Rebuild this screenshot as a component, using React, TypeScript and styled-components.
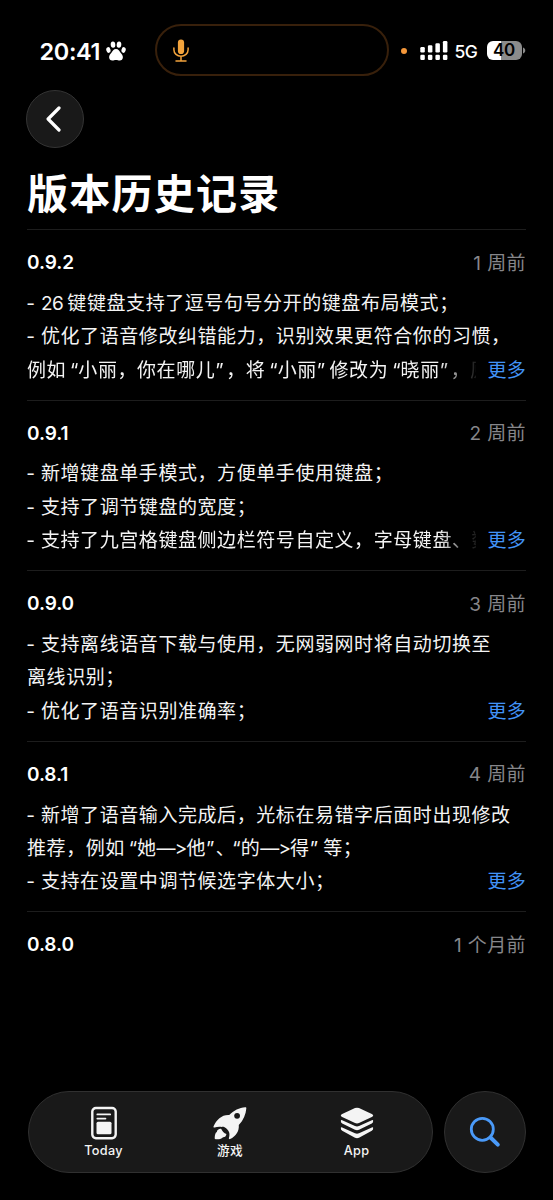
import React from "react";
import styled, { createGlobalStyle } from "styled-components";

const GlobalStyle = createGlobalStyle`
  html, body { margin: 0; padding: 0; background: #000; }
  * { box-sizing: border-box; }
  body {
    font-family: Inter, "Noto Sans CJK SC", sans-serif;
    font-feature-settings: "calt" 0;
    color: #fff;
    text-spacing-trim: space-all;
    text-autospace: no-autospace;
  }
`;

const Screen = styled.div`
  width: 553px;
  height: 1200px;
  display: flex;
  flex-direction: column;
  background: #000;
  overflow: hidden;
`;

const StatusBar = styled.header`
  height: 76px;
  padding: 24px 28px 0 39px;
  display: grid;
  grid-template-columns: 116px 234px 1fr;
  flex: none;
`;

const Clock = styled.div`
  display: flex;
  align-items: center;
  gap: 6px;
  height: 54px;
  padding-left: 0.6px;
  font-size: 23.5px;
  font-weight: 600;
  letter-spacing: -0.4px;
`;

const Island = styled.div`
  height: 52px;
  border: 2px solid #38200b;
  border-radius: 26px;
  padding-left: 16px;
  display: flex;
  align-items: center;
`;

const Indicators = styled.div`
  height: 53px;
  display: flex;
  align-items: center;
  padding-left: 12px;
`;

const MicDot = styled.i`
  width: 6px;
  height: 6px;
  border-radius: 50%;
  background: #f4973a;
  margin-right: 12.5px;
`;

const Network = styled.span`
  font-size: 17.5px;
  font-weight: 500;
  letter-spacing: -0.5px;
  margin: 1px 0 0 7px;
  width: 32px;
`;

const Battery = styled.div`
  width: 35px;
  height: 19px;
  border-radius: 6px;
  background: linear-gradient(90deg, #fff 40%, #8b8b8b 40%);
  color: #000;
  font-size: 17px;
  font-weight: 600;
  letter-spacing: -0.3px;
  line-height: 19px;
  text-align: center;
`;

const NavRow = styled.nav`
  padding: 14px 26px 0;
  height: 86px;
  flex: none;
`;

const BackButton = styled.button`
  width: 58px;
  height: 58px;
  padding: 0;
  border-radius: 50%;
  border: 1px solid #343434;
  background: #191919;
  display: flex;
  align-items: center;
  justify-content: center;
`;

const Title = styled.h1`
  margin: 0 27px;
  height: 67px;
  line-height: 65px;
  font-size: 41px;
  letter-spacing: 1.25px;
  font-weight: 700;
  flex: none;
`;

const History = styled.main`
  padding: 0 27px;
  flex: 1;
`;

const Release = styled.section`
  height: 170.6px;
  border-top: 1px solid #1d1d1d;
  padding-top: 19.5px;
`;

const ReleaseHead = styled.div`
  display: flex;
  justify-content: space-between;
  align-items: center;
  height: 26px;
  margin-bottom: 11.3px;
`;

const Version = styled.h2`
  margin: 0;
  font-size: 19px;
  font-weight: 600;
  letter-spacing: -0.1px;
`;

const Age = styled.span`
  font-size: 19px;
  letter-spacing: 0.4px;
  line-height: 26px;
  color: #86868a;
  padding-top: 2px;
`;

const Notes = styled.div`
  font-size: 19px;
  letter-spacing: 0.57px;
  line-height: 33.4px;
  color: #f4f4f4;
`;

const Line = styled.div`
  white-space: nowrap;
  height: 33.4px;
`;

const LastLine = styled.div`
  display: flex;
  justify-content: space-between;
  height: 33.4px;
`;

const Clipped = styled.div<{ $fade?: boolean }>`
  width: 449px;
  overflow: hidden;
  white-space: nowrap;
  mask-image: ${(p) => (p.$fade ? "linear-gradient(90deg, #000 412px, transparent 453px)" : "none")};
`;

const More = styled.a`
  color: #4293f7;
  flex: none;
  letter-spacing: 0.3px;
`;

const Latin = styled.span<{ $before?: number; $after?: number; $track?: number }>`
  margin-left: ${(p) => p.$before ?? 0}px;
  margin-right: ${(p) => p.$after ?? 0}px;
  letter-spacing: ${(p) => p.$track ?? 0}px;
`;

const Dock = styled.footer`
  height: 109px;
  padding: 0 27px 0 27.5px;
  display: flex;
  gap: 11px;
  flex: none;
`;

const TabBar = styled.div`
  width: 405px;
  height: 82px;
  border-radius: 41px;
  border: 1px solid #303030;
  background: #191919;
  display: grid;
  grid-template-columns: repeat(3, 126.5px);
  justify-content: center;
`;

const Tab = styled.div`
  display: flex;
  flex-direction: column;
  align-items: center;
  padding-top: 14px;
  font-size: 12.7px;
  font-weight: 500;
  line-height: 18px;
  gap: 2px;
  letter-spacing: 0.3px;
  color: #f4f4f4;
`;

const SearchButton = styled.button`
  width: 82px;
  height: 82px;
  padding: 0;
  border-radius: 50%;
  border: 1px solid #303030;
  background: #191919;
  display: flex;
  align-items: center;
  justify-content: center;
`;

const Dash = () => <Latin $before={-0.7} $after={1.2} $track={-0.3}>- </Latin>;
const Arrow = () => <Latin $track={-0.9}>—&gt;</Latin>;
const Open = ({ gap = 0 }: { gap?: number }) => <Latin $before={gap}>“</Latin>;
const Close = ({ gap = 2.5 }: { gap?: number }) => <Latin $after={gap}>”</Latin>;

type Entry = {
  version: string;
  age: string;
  lines: React.ReactNode[];
  fade?: boolean;
};

const entries: Entry[] = [
  {
    version: "0.9.2",
    age: "1 周前",
    fade: true,
    lines: [
      <><Dash /><Latin $after={4} $track={-0.5}>26</Latin>键键盘支持了逗号句号分开的键盘布局模式；</>,
      <><Dash />优化了语音修改纠错能力，识别效果更符合你的习惯，</>,
      <>例如<Open gap={3.8} />小丽，你在哪儿<Close />，将<Open gap={4} />小丽<Close gap={4.3} />修改为<Open gap={4} />晓丽<Close />，原</>,
    ],
  },
  {
    version: "0.9.1",
    age: "2 周前",
    fade: true,
    lines: [
      <><Dash />新增键盘单手模式，方便单手使用键盘；</>,
      <><Dash />支持了调节键盘的宽度；</>,
      <><Dash />支持了九宫格键盘侧边栏符号自定义，字母键盘、数</>,
    ],
  },
  {
    version: "0.9.0",
    age: "3 周前",
    lines: [
      <><Dash />支持离线语音下载与使用，无网弱网时将自动切换至</>,
      <>离线识别；</>,
      <><Dash />优化了语音识别准确率；</>,
    ],
  },
  {
    version: "0.8.1",
    age: "4 周前",
    lines: [
      <><Dash />新增了语音输入完成后，光标在易错字后面时出现修改</>,
      <>推荐，例如<Open gap={3.8} />她<Arrow />他<Close gap={1.5} /><Latin $track={-2.5}>、</Latin><Open />的<Arrow />得<Close gap={5.2} />等；</>,
      <><Dash />支持在设置中调节候选字体大小；</>,
    ],
  },
  { version: "0.8.0", age: "1 个月前", lines: [] },
];

const Paw = () => (
  <svg width="20" height="20" viewBox="0 0 20 20" fill="#fff">
    <ellipse cx="2.4" cy="9" rx="2.1" ry="2.9" transform="rotate(-14 2.4 9)" />
    <ellipse cx="7" cy="3.6" rx="2.3" ry="3.2" transform="rotate(-4 7 3.6)" />
    <ellipse cx="13" cy="3.6" rx="2.3" ry="3.2" transform="rotate(4 13 3.6)" />
    <ellipse cx="17.6" cy="9" rx="2.1" ry="2.9" transform="rotate(14 17.6 9)" />
    <path d="M10 8c2.4 0 3.5 2 4.6 3.7 1.1 1.6 2.3 2.4 2.3 4.5 0 2-1.4 3.3-3.2 3.3-1.4 0-2.2-.5-3.7-.5s-2.3.5-3.7.5c-1.8 0-3.2-1.3-3.2-3.3 0-2.1 1.2-2.9 2.3-4.5C6.5 10 7.6 8 10 8z" />
  </svg>
);

const Mic = () => (
  <svg width="16" height="23" viewBox="0 0 16 23" fill="none" stroke="#f2a33c" strokeWidth="1.5" strokeLinecap="round">
    <rect x="4.9" y=".5" width="6.2" height="14.5" rx="3.1" fill="#f2a33c" stroke="none" />
    <path d="M.9 9v1.7a7.1 6.6 0 0 0 14.2 0V9M8 17.5v4M3 21.9h10" />
  </svg>
);

const Signal = () => (
  <svg width="28" height="20" viewBox="0 0 28 20" fill="#fff">
    <rect x=".3" y="6" width="4.5" height="5.5" rx="1.2" />
    <rect x="7.9" y="4.2" width="4.5" height="7.3" rx="1.2" />
    <rect x="15.4" y="2.2" width="4.5" height="9.3" rx="1.2" />
    <rect x="22.9" y="0" width="4.5" height="11.5" rx="1.2" />
    <rect x=".3" y="13.8" width="4.5" height="5.2" rx="1.2" />
    <rect x="7.9" y="13.8" width="4.5" height="5.2" rx="1.2" />
    <rect x="15.4" y="13.8" width="4.5" height="5.2" rx="1.2" />
    <rect x="22.9" y="13.8" width="4.5" height="5.2" rx="1.2" />
  </svg>
);

const BatteryNub = styled.svg`
  width: 3px;
  height: 7px;
  margin-left: 1px;
`;

const BatteryTip = () => (
  <BatteryNub viewBox="0 0 3 7">
    <path d="M0 .5c3 1 3 5 0 6z" fill="#8b8b8b" />
  </BatteryNub>
);

const Chevron = () => (
  <svg width="18" height="28" viewBox="0 0 18 28" fill="none" stroke="#fff" strokeWidth="3.2" strokeLinecap="round" strokeLinejoin="round">
    <path d="M13 3 2.1 14 13 25" />
  </svg>
);

const TodayIcon = () => (
  <svg width="34" height="34" viewBox="0 0 34 34">
    <rect x="5.3" y="2" width="23.4" height="30.2" rx="3.6" fill="none" stroke="#f4f4f4" strokeWidth="2.4" />
    <rect x="9.5" y="15.8" width="15" height="12.4" rx="1.5" fill="#f4f4f4" />
    <path d="M10.3 8.4h12.9M10.3 12.6h8.2" stroke="#f4f4f4" strokeWidth="1.7" strokeLinecap="round" />
  </svg>
);

const RocketIcon = () => (
  <svg width="34" height="34" viewBox="0 0 34 34" fill="#f4f4f4">
    <path d="M32.2 1.2c1 0 1.2.5 1.1 1.4-.4 5.500-2.800 11.600-7.500 16.500.5 6.100-2.800 11.500-8.700 14-.8.300-1.400-.2-1.200-1 .6-2.100.8-4 .2-5.900-.8-1.700-2.300-3.700-4.500-4.900-1.200-.4-2-.6-3-.3-2.300-.4-4.600-.1-7 .4-.9.2-1.400-.4-1-1.200C3.600 13.600 8.900 8.500 16.200 9 20.600 4.400 26.500 1.500 32.200 1.200z" />
    <circle cx="24.1" cy="9.8" r="2.9" fill="#191919" />
    <path d="M8.300 22.900c.8 2.200 2.700 4.400 5.100 5-.1 2-1.600 3.400-3.400 3.300-.9 1.500-3.700 2.300-7.400 2-.7 0-1-.4-.9-1.100.1-3.200.6-5.500 2.100-6.200.4-1.900 2.100-3.400 4.500-3z" />
  </svg>
);

const AppIcon = () => (
  <svg width="34" height="34" viewBox="0 0 34 34" fill="#f4f4f4">
    <path d="M15 2.1q2-.9 4 0l12.8 5.8q2.8 1.5 0 3L19 17q-2 .9-4 0L2.2 10.9q-2.8-1.5 0-3z" />
    <path d="M.9 14.3Q1.1 13.7 2.2 14.2L15 20q2 .9 4 0l12.8-5.8q1.1-.5 1.3.1.5 2.3-1.3 3.3L19 23.8q-2 .9-4 0L2.2 17.6Q.4 16.6.9 14.3z" />
    <path d="M.9 21.5Q1.1 20.9 2.2 21.4L15 27.2q2 .9 4 0l12.8-5.8q1.1-.5 1.3.1.5 2.3-1.3 3.3L19 31.8q-2 .9-4 0L2.2 24.8Q.4 23.8.9 21.5z" />
  </svg>
);

const SearchIcon = () => (
  <svg width="32" height="32" viewBox="0 0 32 32" fill="none" stroke="#4a9af9" strokeLinecap="round">
    <circle cx="13.3" cy="13.3" r="11" strokeWidth="2.8" />
    <path d="M21.5 21.5 28.8 28.6" strokeWidth="4" />
  </svg>
);

export default function App() {
  return (
    <Screen>
      <GlobalStyle />
      <StatusBar>
        <Clock>20:41<Paw /></Clock>
        <Island><Mic /></Island>
        <Indicators>
          <MicDot />
          <Signal />
          <Network>5G</Network>
          <Battery>40</Battery>
          <BatteryTip />
        </Indicators>
      </StatusBar>
      <NavRow>
        <BackButton aria-label="返回"><Chevron /></BackButton>
      </NavRow>
      <Title>版本历史记录</Title>
      <History>
        {entries.map((entry) => (
          <Release key={entry.version}>
            <ReleaseHead>
              <Version>{entry.version}</Version>
              <Age>{entry.age}</Age>
            </ReleaseHead>
            {entry.lines.length > 0 && (
              <Notes>
                <Line>{entry.lines[0]}</Line>
                <Line>{entry.lines[1]}</Line>
                <LastLine>
                  <Clipped $fade={entry.fade}>{entry.lines[2]}</Clipped>
                  <More>更多</More>
                </LastLine>
              </Notes>
            )}
          </Release>
        ))}
      </History>
      <Dock>
        <TabBar>
          <Tab><TodayIcon />Today</Tab>
          <Tab><RocketIcon />游戏</Tab>
          <Tab><AppIcon />App</Tab>
        </TabBar>
        <SearchButton aria-label="搜索"><SearchIcon /></SearchButton>
      </Dock>
    </Screen>
  );
}
